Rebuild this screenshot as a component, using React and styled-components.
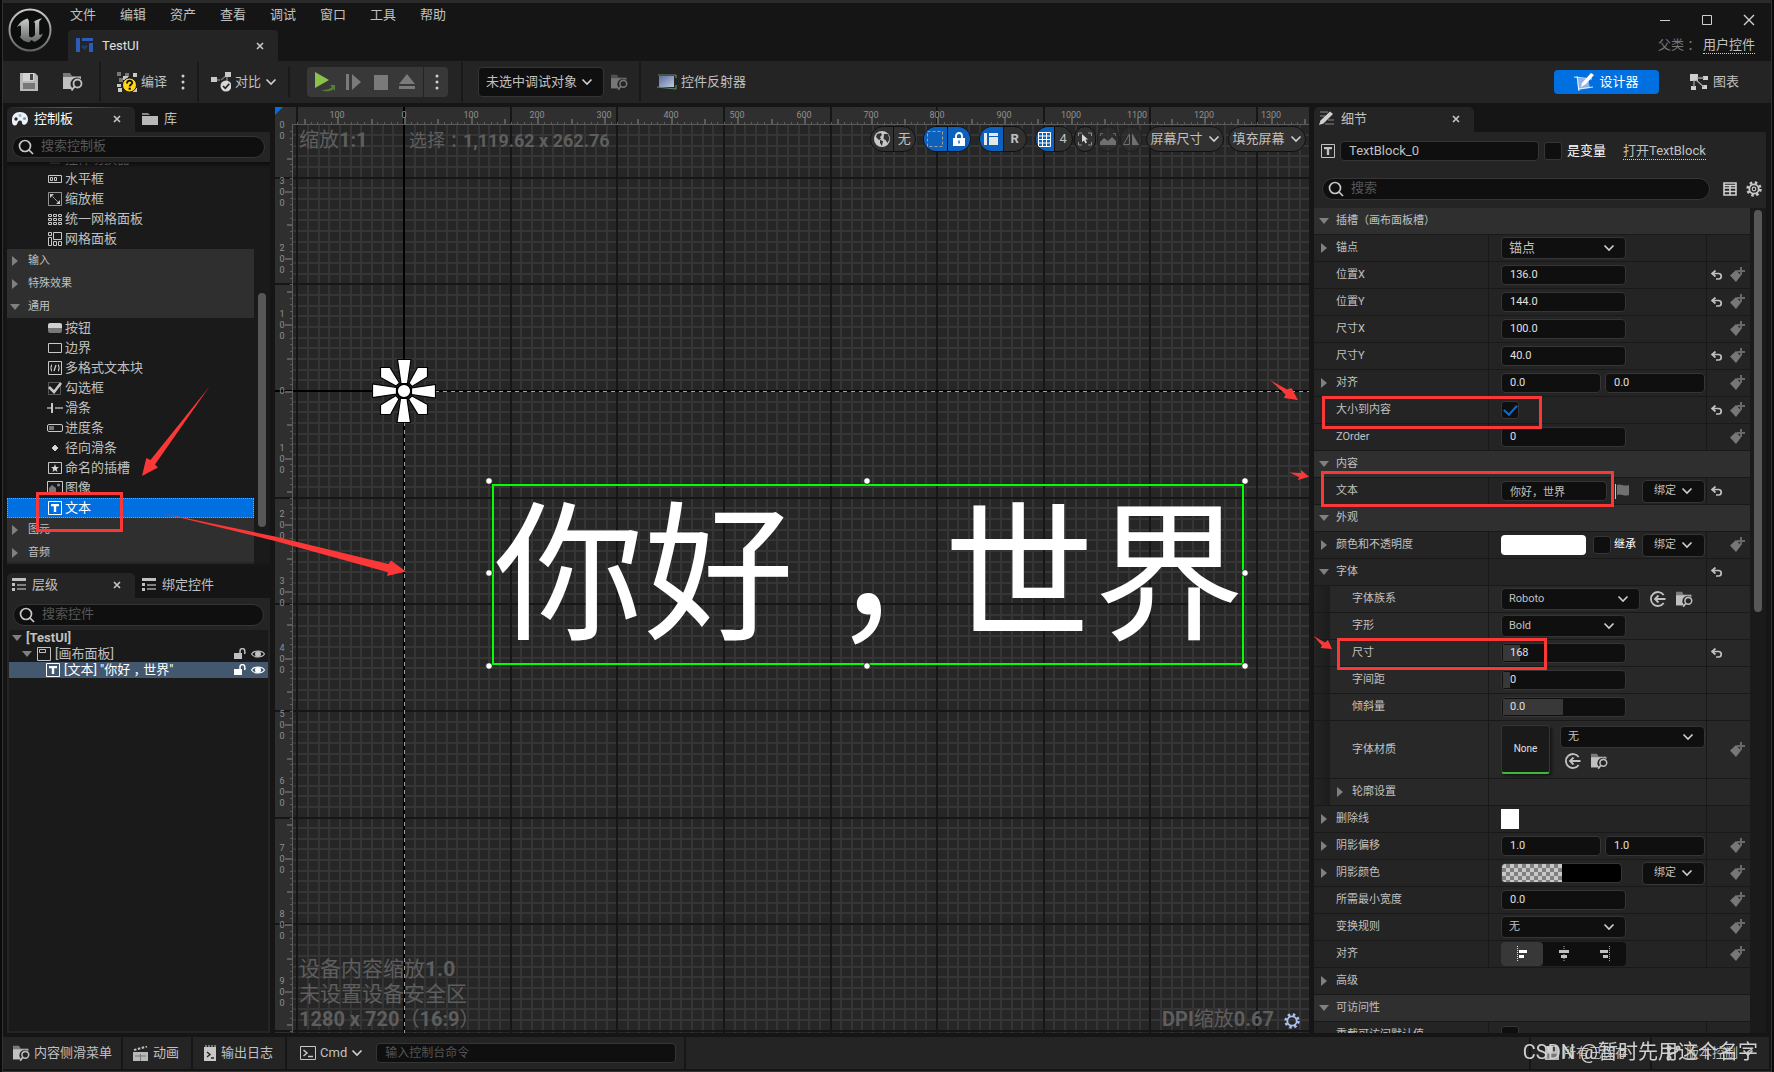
import React from "react";
import styled, { createGlobalStyle, css } from "styled-components";

const GlobalStyle = createGlobalStyle`
  * {
    box-sizing: border-box;
  }

  body {
    margin: 0;
    background: #0a0a0a;
    overflow: hidden;
  }

  body, button, input, select {
    font-family: Roboto, "Noto Sans CJK SC", sans-serif;
    font-size: 13px;
    line-height: 16px;
    color: #c0c0c0;
  }

  button {
    border: 0;
    padding: 0;
    margin: 0;
    background: none;
    white-space: nowrap;
  }

  svg {
    display: block;
    flex: none;
  }
`;

/* ---------- icons ---------- */

const Svg = ({ w = 16, h = 16, box, children, ...rest }) => (
  <svg width={w} height={h} viewBox={box || `0 0 ${w} ${h}`} aria-hidden="true" {...rest}>
    {children}
  </svg>
);

const Chevron = () => (
  <Svg w={12} h={8} fill="none" stroke="#d0d0d0" strokeWidth="1.600">
    <path d="M1.500 1.500 6 6l4.500-4.500" />
  </Svg>
);

const Cross = ({ size = 8 }) => (
  <Svg w={size} h={size} box="0 0 8 8" stroke="#c8c8c8" strokeWidth="1.600">
    <path d="M1 1l6 6M7 1L1 7" />
  </Svg>
);

const ArrowRight = () => (
  <Svg w={10} h={10} fill="#808080">
    <path d="M2 0l6 5-6 5z" />
  </Svg>
);

const ArrowDown = () => (
  <Svg w={10} h={10} fill="#808080">
    <path d="M0 2h10L5 8z" />
  </Svg>
);

const SearchIcon = () => (
  <Svg fill="none" stroke="#c8c8c8" strokeWidth="1.700">
    <circle cx="7" cy="7" r="5.500" />
    <path d="M11 11l4 4" />
  </Svg>
);

const Dots = () => (
  <Svg w={4} h={16} fill="#d0d0d0">
    <circle cx="2" cy="2" r="1.500" />
    <circle cx="2" cy="8" r="1.500" />
    <circle cx="2" cy="14" r="1.500" />
  </Svg>
);

const BrowseIcon = ({ size = 20, color = "#c0c0c0", bg = "#242424" }) => (
  <Svg w={size} h={size} box="0 0 20 20">
    <path d="M0 1h7l2 3h9v3H0z" fill={color} opacity=".55" />
    <path d="M0 5h18v12H0z" fill={color} />
    <circle cx="14" cy="12" r="6.500" fill={bg} />
    <circle cx="14.500" cy="11.500" r="4" fill={bg} stroke={color} strokeWidth="1.800" />
    <path d="M11.500 14.500L8.500 18.500" stroke={color} strokeWidth="2" />
  </Svg>
);

const UseIcon = () => (
  <Svg fill="none" stroke="#c0c0c0" strokeWidth="1.800">
    <path d="M13.700 4A7 7 0 1 0 13.700 12" />
    <path d="M15.500 8H5M8.500 4.500L5 8l3.500 3.500" />
  </Svg>
);

const UnrealLogo = () => (
  <Svg w={44} h={44}>
    <defs>
      <linearGradient id="ueMetal" x1="0" y1="0" x2="0" y2="1">
        <stop offset="0" stopColor="#c8cccc" />
        <stop offset="1" stopColor="#606464" />
      </linearGradient>
    </defs>
    <circle cx="22" cy="22" r="20.500" fill="#0d0d0d" stroke="url(#ueMetal)" strokeWidth="2" />
    <path
      fill="url(#ueMetal)"
      d="M19.500 10.500c-4 1-8.500 4-10.500 9 1.500-1.800 3-2.600 3.600-1.800.5.600.4 1.800.4 3v6.500c0 1-.6 1.600-1.500 1.400 2.500 3.600 5.500 5.400 9.500 6l2.500-2.600 3 2c4-1.500 7-4.500 8.500-8.500-1.500 1.300-3 1.800-3.500 1.200-.4-.4-.3-1.400-.3-2.500V13.800c.6-1.500 1.800-2.400 3-3.300-3 .2-6.500 1.500-9 4 .9-.4 1.800-.2 1.800 1.200v11c-.8 1.300-2 2.200-3.500 2.500-1.600.3-2.500-.6-2.500-2.200V14c0-1.500-.6-2.300-1.500-3.500z"
    />
  </Svg>
);

const WidgetIcon = () => (
  <Svg w={17} h={15}>
    <path d="M0 0h4v14H0zM6 0h11v3H6zM13 5h4v9h-4z" fill="#2b5cb8" />
    <path d="M8.500 12L5.500 9c-.5-1.500 2-2.500 3-.7 1-1.800 3.500-.8 3 .7z" fill="#1d3c78" />
  </Svg>
);

const SaveIcon = ({ size = 18 }) => (
  <Svg w={size} h={size} box="0 0 18 18" fill="#b8b8b8">
    <path d="M0 0h15l3 3v15H0z" />
    <path d="M3 0h11v8H3z" fill="#d4d4d4" />
    <path d="M10 1h3v6h-3z" fill="#444" />
    <path d="M3 10h12v6H3z" fill="#777" />
  </Svg>
);

const CompileIcon = () => (
  <Svg w={20} h={20}>
    <path d="M0 0h4v4H0zM8 1h4v4H8zM2 6h4v4H2z" fill="#777" />
    <path d="M16 1h4v4h-4zM0 12h4v3H0zM1 16h4v4H1zM6 4h5v4H6zM16 16h4v4h-4z" fill="#c8c8c8" />
    <circle cx="12.500" cy="13" r="7" fill="#ffd618" stroke="#1a1a1a" />
    <path d="M10 11.500c0-3.800 5.200-3.500 5.200-.7 0 1.700-2.500 1.800-2.500 3.700" fill="none" stroke="#111" strokeWidth="1.900" />
    <path d="M11.600 15.700h2.200v2h-2.200z" fill="#111" />
  </Svg>
);

const DiffIcon = () => (
  <Svg w={20} h={20}>
    <path d="M5 8h4M10 8l6-5v8" stroke="#777" strokeWidth="1.500" fill="none" />
    <path d="M0 5h6v5H0zM14 0h6v5h-6z" fill="#c8c8c8" />
    <circle cx="15" cy="14" r="5.500" fill="#d8d8d8" />
    <path d="M12 14l2.300 2.300 4-4.500" fill="none" stroke="#222" strokeWidth="1.700" />
  </Svg>
);

const PlayIcon = () => (
  <Svg w={20} h={20}>
    <path d="M0 0l14 8L0 16z" fill="#8bc34a" />
    <path d="M6 18c5 .5 9-1 11-3l-2-2h5v6l-1.500-2c-3 2.500-7 3-12.500 1z" fill="#55803a" />
  </Svg>
);

const StepIcon = () => (
  <Svg w={16} h={16} fill="#7a7a7a">
    <path d="M0 0h3v16H0zM6 0l9 8-9 8z" />
  </Svg>
);

const StopIcon = () => (
  <Svg w={14} h={16} fill="#7a7a7a">
    <path d="M0 1h14v15H0z" />
  </Svg>
);

const EjectIcon = () => (
  <Svg w={16} h={16} fill="#7a7a7a">
    <path d="M8 0l8 10H0zM0 12h16v3H0z" />
  </Svg>
);

const ReflectorIcon = () => (
  <Svg w={20} h={16}>
    <defs>
      <linearGradient id="screen" x1="0" y1="0" x2="1" y2="1">
        <stop offset="0" stopColor="#5c6ca0" />
        <stop offset="1" stopColor="#c0c8e0" />
      </linearGradient>
    </defs>
    <path d="M2 2h15v11H2z" fill="url(#screen)" />
    <path d="M1 1h18M0 13l19 2M19 1v3M19 11v4" stroke="#5f8a66" strokeWidth="1.200" fill="none" />
  </Svg>
);

const DesignerIcon = () => (
  <Svg w={20} h={18}>
    <path d="M3 5l11 1 2 9-12 2z" fill="#8fb4e6" />
    <path d="M0 4l18 2M3 3l2 15M4 16l15-2" stroke="#e6eefa" strokeWidth="1" />
    <path d="M7 14l1-4L17 0l3 2-8 9z" fill="#fff" />
  </Svg>
);

const GraphIcon = () => (
  <Svg w={18} h={16} fill="#d0d0d0">
    <path d="M0 0h8v7H0zM13 2h5v4h-5zM1 12h5v4H1zM12 11h5v4h-5z" />
    <path d="M7 4h7M4 6v7M6 6l8 7" stroke="#a0a0a0" strokeWidth="1.300" />
  </Svg>
);

const PaletteIcon = () => (
  <Svg w={16} h={14}>
    <path d="M8 0c5 0 8 3 8 7.500 0 4-3 6-5 5-2-1 0-4-3-4s-2 5-5 5C0 13.500 0 10 0 8 0 3 3 0 8 0z" fill="#eef2f8" />
    <circle cx="4" cy="7" r="1.700" fill="#2a2a2a" />
    <circle cx="8" cy="3.500" r="1.500" fill="#9ab4dc" />
    <circle cx="12.500" cy="6.500" r="1.600" fill="#7ba0d8" />
  </Svg>
);

const FolderIcon = () => (
  <Svg w={16} h={12} fill="#b8b8b8">
    <path d="M0 0h6l2 2H0z" fill="#888" />
    <path d="M0 3h16v9H0z" />
  </Svg>
);

const ListIcon = () => (
  <Svg w={14} h={13} fill="#c0c0c0">
    <path d="M0 0h14v3H0zM0 5h3v3H0zM0 10h3v3H0z" />
    <path d="M5 6h9v2H5zM5 10h9v2H5z" fill="#808080" />
  </Svg>
);

const PencilIcon = () => (
  <Svg w={16} h={15}>
    <path d="M1 1h8M1 5h5M9 9h6M6 13h9" stroke="#666" strokeWidth="1.500" />
    <path d="M0 14l1.500-4.500L11 .5 14 3 4.500 12.500z" fill="#d0d0d0" />
  </Svg>
);

const TIcon = () => (
  <Svg w={14} h={14}>
    <path d="M.5.5h13v13H.5z" fill="none" stroke="currentColor" />
    <path d="M3 3h8v2.200H8.200V11H5.800V5.200H3z" fill="currentColor" />
  </Svg>
);

const Diamond = () => (
  <Svg w={16} h={16}>
    <path d="M7 3l5 5.500L7 15 1 8.500z" fill="#777" />
    <path d="M12 0v8M8 4h8" stroke="#6a6a6a" strokeWidth="2" />
  </Svg>
);

const Undo = () => (
  <Svg w={12} h={10} fill="none" stroke="#c0c0c0" strokeWidth="1.700">
    <path d="M4.500.5L1 3.500l3.500 3M1 3.500h6.500a2.700 2.700 0 0 1 0 5.500H5" />
  </Svg>
);

const Flag = () => (
  <Svg w={14} h={15}>
    <path d="M.5 0v15" stroke="#c8c8c8" />
    <path d="M2 1c4-2 6 2 12 0v10c-5 2-8-2-12 0z" fill="#707070" />
  </Svg>
);

const OpenLock = () => (
  <Svg w={12} h={12}>
    <path d="M0 5h8v6H0z" fill="currentColor" />
    <path d="M6 5V3a2.400 2.400 0 0 1 4.800 0v3" fill="none" stroke="currentColor" strokeWidth="1.500" />
  </Svg>
);

const Eye = () => (
  <Svg w={14} h={10}>
    <path d="M.5 5C3 1 11 1 13.500 5 11 9 3 9 .5 5z" fill="none" stroke="currentColor" strokeWidth="1.200" />
    <circle cx="7" cy="5" r="3" fill="currentColor" />
  </Svg>
);

const TableIcon = () => (
  <Svg w={14} h={14} fill="none" stroke="#d0d0d0" strokeWidth="1.600">
    <path d="M1 1h12v12H1zM1 3.500h12M1 6h12M1 9.500h12M7 4v9" />
  </Svg>
);

const Gear = ({ color = "#c8c8c8", hub = true }) => (
  <Svg fill="none" stroke={color}>
    <circle cx="8" cy="8" r="6.400" strokeWidth="2.600" strokeDasharray="2.500 2.527" />
    <circle cx="8" cy="8" r="4.700" strokeWidth="1.800" />
    {hub && <circle cx="8" cy="8" r="1.800" strokeWidth="1.200" />}
  </Svg>
);

const treeIcons = {
  switcher: <path d="M3 4h10v8H3z" fill="#aaa" />,
  hbox: <path d="M1.500 4.500h13v7h-13zM3.500 6.500h2v3h-2zM7.500 6.500h2v3h-2z" />,
  scale: (
    <>
      <path d="M1.500 1.500h13v13h-13z" opacity=".7" />
      <path d="M4 4l8 8" strokeDasharray="2 1" />
      <path d="M3 3h4L3 7zM13 13H9l4-4z" fill="#c8c8c8" stroke="none" />
    </>
  ),
  uniform: <path d="M1.500 3.500h3v2h-3zM6.500 3.500h3v2h-3zM11.500 3.500h3v2h-3zM1.500 7.500h3v2h-3zM6.500 7.500h3v2h-3zM11.500 7.500h3v2h-3zM1.500 11.500h3v2h-3zM6.500 11.500h3v2h-3zM11.500 11.500h3v2h-3z" />,
  grid: <path d="M1.500 1.500h3v3h-3zM6.500 1.500h8v7h-8zM1.500 6.500h3v8h-3zM6.500 10.500h3v4h-3zM11.500 10.500h3v4h-3z" />,
  button: (
    <>
      <path d="M1 8V5a2 2 0 0 1 2-2h10a2 2 0 0 1 2 2v3z" fill="#d0d0d0" stroke="none" />
      <path d="M1 8v3a2 2 0 0 0 2 2h10a2 2 0 0 0 2-2V8z" fill="#777" stroke="none" />
    </>
  ),
  border: <path d="M1.500 3.500h13v9h-13z" />,
  rich: (
    <>
      <path d="M1.500 1.500h13v13h-13z" />
      <path d="M5 5c-1 0-.5 3-1.500 3 1 0 .5 3 1.500 3M11 5c1 0 .5 3 1.500 3-1 0-.5 3-1.500 3M9 5l-2 6" strokeWidth="1.300" />
    </>
  ),
  check: (
    <>
      <path d="M1.500 2.500h12v12h-12z" opacity=".35" />
      <path d="M2 7l5 5 7-9" strokeWidth="2.600" />
    </>
  ),
  slider: (
    <>
      <path d="M0 8h5M8 8h8" strokeWidth="2" stroke="#888" />
      <path d="M5 3v10" strokeWidth="2" />
    </>
  ),
  progress: (
    <>
      <rect x=".5" y="4.500" width="15" height="7" rx="1.500" />
      <path d="M2 6h5v4H2z" fill="#777" stroke="none" />
    </>
  ),
  radial: <path d="M8 5l3 3-3 3-3-3z" fill="#d8d8d8" />,
  named: (
    <>
      <path d="M1.500 2.500h13v11h-13z" />
      <path d="M8 4l1 3h3L9.700 9l.8 3L8 10.200 5.500 12l.8-3L4 7h3z" fill="#d8d8d8" stroke="none" />
    </>
  ),
  image: (
    <>
      <path d="M.5 1.500h15v12H.5z" />
      <path d="M2 13V8l3-3 4 3v5z" fill="#777" stroke="none" />
      <circle cx="11.500" cy="5" r="1.500" fill="#888" stroke="none" />
    </>
  ),
  text: (
    <>
      <path d="M1.500 1.500h13v13h-13z" />
      <path d="M4 4h8v2.200H9.200V12H6.800V6.200H4z" fill="#fff" stroke="none" />
    </>
  ),
};

const TreeIcon = ({ name }) => (
  <Svg fill="none" stroke={name === "text" ? "#fff" : "#c8c8c8"}>
    {treeIcons[name]}
  </Svg>
);

/* ---------- shell ---------- */

const Window = styled.div`
  position: relative;
  height: 100vh;
  margin: 0 2px;
  padding-bottom: 2px;
  display: flex;
  flex-direction: column;
  background: #151515;
  border: 1px solid #333;
  border-top-width: 3px;
  border-top-color: #2a2a2a;
`;

const TitleBar = styled.header`
  flex: 0 0 58px;
  display: flex;
  padding-left: 5px;
`;

const LogoCell = styled.div`
  width: 50px;
  padding-top: 5px;
`;

const TitleMain = styled.div`
  flex: 1;
  display: flex;
  flex-direction: column;
  justify-content: space-between;
`;

const Menu = styled.nav`
  display: flex;
  padding-top: 4px;

  button {
    width: 50px;
    text-align: center;
  }
`;

const AssetTab = styled.div`
  width: 210px;
  height: 31px;
  margin-left: 10px;
  padding: 0 14px 0 8px;
  display: flex;
  align-items: center;
  background: #242424;
  border-radius: 4px 4px 0 0;
  color: #e0e0e0;

  span {
    flex: 1;
    padding-left: 9px;
  }
`;

const TitleSide = styled.div`
  padding: 6px 16px 0 0;
  display: flex;
  flex-direction: column;
  align-items: flex-end;
  gap: 6px;
`;

const WindowButtons = styled.div`
  display: flex;
  gap: 30px;

  button {
    width: 12px;
    height: 22px;
    display: flex;
    align-items: center;
    justify-content: center;
  }
`;

const ParentClass = styled.div`
  display: flex;
  gap: 6px;
  color: #777;
`;

const DottedLink = styled.a`
  color: #c0c0c0;
  text-decoration: none;
  border-bottom: 1px dotted #d0d0d0;
`;

// full-width marks sit in the middle of their cell
const Mark = styled.span`
  display: inline-block;
  width: 1em;
  text-indent: 0.25em;
  white-space: nowrap;
`;

const Toolbar = styled.div`
  flex: 0 0 42px;
  display: flex;
  align-items: center;
  background: #242424;
`;

const ToolGroup = styled.div`
  height: ${(p) => (p.$short ? 30 : 40)}px;
  padding: 0 ${(p) => p.$right || 0}px 0 ${(p) => p.$left || 0}px;
  display: flex;
  align-items: center;
  gap: ${(p) => p.$gap || 0}px;
  border-right: ${(p) => (p.$last ? 0 : 2)}px solid #191919;
`;

const ToolButton = styled.button`
  display: flex;
  align-items: center;
  gap: 4px;
`;

const PlayGroup = styled.div`
  width: 141px;
  height: 30px;
  padding: 0 9px 0 8px;
  display: flex;
  align-items: center;
  justify-content: space-between;
  background: #383838;
  border-radius: 4px;

  i {
    width: 1px;
    height: 30px;
    background: #242424;
    margin: 0 0 0 -4px;
  }
`;

const ModeSwitch = styled.div`
  margin-left: auto;
  padding-right: 32px;
  display: flex;
  align-items: center;
  gap: 31px;
`;

const ModeButton = styled(ToolButton)`
  height: 24px;
  gap: 5px;
  ${(p) =>
    p.$active &&
    css`
      width: 105px;
      justify-content: center;
      background: #0070e0;
      border-radius: 4px;
      color: #fff;
    `}
`;

const Workspace = styled.main`
  flex: 1;
  min-height: 0;
  display: grid;
  grid-template-columns: 263px minmax(0, 1fr) 452px;
  column-gap: 5px;
  padding: 4px 5px 4px 4px;
`;

const StatusBar = styled.footer`
  flex: 0 0 32px;
  display: flex;
  background: #242424;
`;

const StatusItem = styled.div`
  display: flex;
  align-items: center;
  gap: ${(p) => p.$gap || 5}px;
  padding: 0 ${(p) => p.$right || 12}px 0 ${(p) => p.$left || 10}px;
  border-right: 2px solid #161616;
  margin-left: ${(p) => (p.$push ? "auto" : 0)};
`;

/* ---------- form controls ---------- */

const Field = styled.input`
  width: ${(p) => (p.$w ? `${p.$w}px` : "100%")};
  min-width: 0;
  height: 20px;
  padding: 0 8px 1px;
  font-size: ${(p) => p.$size || 11}px;
  color: ${(p) => p.$color || "#e0e0e0"};
  border: 1px solid #353535;
  border-radius: 4px;
  outline: 0;
  background: ${(p) =>
    p.$fill ? `linear-gradient(#383838, #383838) 1px 1px / ${p.$fill}% calc(100% - 2px) no-repeat #0f0f0f` : "#0f0f0f"};

  &::placeholder {
    color: #555;
  }
`;

const SearchBox = styled.label`
  flex: 1;
  height: 22px;
  padding: 0 5px;
  display: flex;
  align-items: center;
  gap: 7px;
  background: #0f0f0f;
  border: 1px solid #353535;
  border-radius: 11px;

  input {
    flex: 1;
    min-width: 0;
    padding: 0 0 2px;
    border: 0;
    outline: 0;
    background: none;
  }

  input::placeholder {
    color: #575757;
  }
`;

const Search = ({ placeholder }) => (
  <SearchBox>
    <SearchIcon />
    <input type="text" aria-label={placeholder} placeholder={placeholder} />
  </SearchBox>
);

const ComboWrap = styled.div`
  width: ${(p) => (p.$w ? `${p.$w}px` : "100%")};
  display: grid;
  align-items: center;

  select {
    grid-area: 1 / 1;
    width: 100%;
    height: ${(p) => p.$h || 22}px;
    padding: 0 24px 0 7px;
    font-size: ${(p) => p.$size || 11}px;
    appearance: none;
    background: #0f0f0f;
    border: 1px solid #353535;
    border-radius: 4px;
    outline: 0;
  }

  svg {
    grid-area: 1 / 1;
    justify-self: end;
    margin-right: 11px;
    pointer-events: none;
  }
`;

const Combo = ({ value, id, label, ...size }) => (
  <ComboWrap {...size}>
    <select id={id} aria-label={label}>
      <option>{value}</option>
    </select>
    <Chevron />
  </ComboWrap>
);

const Check = styled.input.attrs({ type: "checkbox" })`
  appearance: none;
  flex: none;
  width: 18px;
  height: 18px;
  margin: 0;
  background: #0f0f0f;
  border: 1px solid #353535;
  border-radius: 3px;
  display: grid;
  place-items: center;

  &:checked::after {
    content: "";
    width: 11px;
    height: 6px;
    border: solid #0070e0;
    border-width: 0 0 2px 2px;
    transform: rotate(-48deg) translate(1px, -1px);
  }
`;

const BindButton = styled.button`
  width: 63px;
  height: 23px;
  margin-left: auto;
  display: flex;
  align-items: center;
  justify-content: center;
  gap: 5px;
  font-size: 11px;
  background: #0f0f0f;
  border: 1px solid #353535;
  border-radius: 4px;
`;

const Bind = () => (
  <BindButton>
    绑定
    <Chevron />
  </BindButton>
);

/* ---------- dock tabs ---------- */

const TabRow = styled.div`
  height: 25px;
  display: flex;
`;

const Tab = styled.div`
  width: ${(p) => p.$w || 128}px;
  padding: 0 14px 2px ${(p) => (p.$idle ? 7 : 5)}px;
  display: flex;
  align-items: center;
  gap: 6px;
  color: ${(p) => (p.$focus ? "#fff" : "#c0c0c0")};
  background: ${(p) => (p.$idle ? "none" : "#242424")};
  border-radius: 5px 5px 0 0;
  ${(p) =>
    p.$focus &&
    css`
      background: linear-gradient(90deg, #242424, #0070e0 50%, #242424) 0 0 / 100% 1px no-repeat #242424;
    `}

  span {
    flex: 1;
  }
`;

const SearchRow = styled.div`
  padding: ${(p) => p.$pad || "4px 5px"};
  background: #242424;
  display: flex;
`;

const LeftColumn = styled.div`
  min-height: 0;
  display: flex;
  flex-direction: column;
  gap: 6px;
`;

const PalettePanel = styled.section`
  flex: 0 0 460px;
  min-height: 0;
  display: flex;
  flex-direction: column;
  overflow: hidden;
`;

const PaletteBody = styled.div`
  position: relative;
  flex: 1;
  min-height: 0;
  display: flex;
  background: #1a1a1a;
  overflow: hidden;

  &::before,
  &::after {
    content: "";
    position: absolute;
    left: 0;
    right: 0;
    height: 6px;
  }

  &::before {
    top: 0;
    background: linear-gradient(#0d0d0d, transparent);
  }

  &::after {
    bottom: 0;
    background: linear-gradient(transparent, #151515);
  }
`;

const PaletteList = styled.ul`
  flex: 1;
  margin: 0;
  padding: 0 0 3px;
  list-style: none;
  display: flex;
  flex-direction: column;
  justify-content: flex-end;
`;

const PaletteItem = styled.li`
  flex: 0 0 20px;
  padding-left: 40px;
  display: flex;
  align-items: center;
  gap: 2px;
  ${(p) =>
    p.$selected &&
    css`
      background: #0070e0;
      color: #fff;
      outline: 1px dotted #c89632;
      outline-offset: -1px;
    `}
`;

const Category = styled.li`
  flex: 0 0 23px;
  padding-left: 3px;
  display: flex;
  align-items: center;
  gap: 8px;
  font-size: 11px;
  background: #2f2f2f;
`;

const Track = styled.div`
  flex: 0 0 16px;
  display: flex;
  justify-content: center;
  background: #1a1a1a;
`;

const Thumb = styled.div`
  width: 8px;
  height: ${(p) => p.$h}px;
  margin-top: ${(p) => p.$top}px;
  border-radius: 4px;
  background: #575757;
`;

const HierarchyPanel = styled.section`
  flex: 1;
  min-height: 0;
  display: flex;
  flex-direction: column;
`;

const HierarchyBody = styled.div`
  flex: 1;
  background: #1a1a1a;
  border: solid #242424;
  border-width: 0 2px 2px;
`;

const HierarchyRow = styled.div`
  height: 16px;
  padding: 0 3px 0 ${(p) => 3 + p.$depth * 10}px;
  display: flex;
  align-items: center;
  gap: 4px;
  color: ${(p) => (p.$selected ? "#fff" : "#c0c0c0")};
  background: ${(p) => (p.$selected ? "#43586f" : "none")};

  svg + svg {
    margin-left: 1px;
  }
`;

const HierarchyName = styled.span`
  flex: 1;
  font-weight: ${(p) => (p.$root ? 700 : 400)};
`;

/* ---------- canvas ---------- */

const CanvasPanel = styled.section`
  position: relative;
  overflow: hidden;
  background: #262626;
`;

const Drawing = styled.svg`
  position: absolute;
  inset: 0;
  width: 100%;
  height: 100%;
`;

const CanvasTools = styled.div`
  position: absolute;
  top: 19px;
  right: 3px;
  display: flex;
  gap: 1px;
`;

const Pill = styled.div`
  width: ${(p) => p.$w || 22}px;
  height: 26px;
  margin-left: ${(p) => p.$gap || 0}px;
  display: flex;
  overflow: hidden;
  background: ${(p) => (p.$dim ? "rgba(47, 47, 47, 0.6)" : "#313131")};
  border: 1px solid ${(p) => (p.$dim ? "#202020" : "#111")};
  border-radius: 13px;
`;

const PillButton = styled.button`
  flex: 1;
  display: flex;
  align-items: center;
  justify-content: center;
  gap: 5px;
  background: ${(p) => (p.$on ? "#0c61bd" : "none")};

  & + & {
    border-left: 1px solid #111;
  }
`;

const CanvasNote = styled.div`
  position: absolute;
  display: flex;
  align-items: center;
  font-size: ${(p) => p.$size || 20}px;
  line-height: 25px;
  color: #5e5e5e;
`;

const TextWidget = styled.div`
  position: absolute;
  left: 217px;
  top: 377px;
  width: 752px;
  height: 181px;
  border: 2px solid #00ff00;
  text-align: center;
  font-size: 150px;
  line-height: 182px;
  color: #fff;
  white-space: nowrap;
`;

const ORIGIN = { x: 129, y: 284 };
const CELL = 106.625;
const HUNDRED = 66.667;

const range = (from, to) => Array.from({ length: to - from + 1 }, (_, i) => from + i);

const gridLines = (origin, size) => {
  const step = CELL / 10;
  return range(-Math.floor(origin / step), Math.ceil(size / step)).map((i) => ({
    pos: Math.round(origin + i * step),
    major: i % 10 === 0,
  }));
};

const tickLength = (i) => (i % 10 === 0 ? 7 : i % 5 === 0 ? 5 : 2);

const CanvasDrawing = () => {
  const xs = gridLines(ORIGIN.x, 3000);
  const ys = gridLines(ORIGIN.y, 2000);
  const ticksX = range(-16, 400);
  const ticksY = range(-40, 300);
  return (
    <Drawing aria-hidden="true">
      <g fill="#353535">
        {xs.filter((l) => !l.major).map((l) => <rect key={`x${l.pos}`} x={l.pos - 1} y="0" width="2" height="3000" />)}
        {ys.filter((l) => !l.major).map((l) => <rect key={`y${l.pos}`} x="0" y={l.pos - 1} width="3000" height="2" />)}
      </g>
      <path d="M0 0H3000V17H18V3000H0z" fill="#2f2f2f" />
      <g fill="#161616">
        {xs.filter((l) => l.major).map((l) => <rect key={`x${l.pos}`} x={l.pos - 1} y="0" width="2" height="3000" />)}
        {ys.filter((l) => l.major).map((l) => <rect key={`y${l.pos}`} x="0" y={l.pos - 1} width="3000" height="2" />)}
      </g>
      <path d={`M${ORIGIN.x} 0V3000M0 ${ORIGIN.y}H3000`} stroke="#000" strokeWidth="2" />
      <path
        d={`M${ORIGIN.x + 0.5} ${ORIGIN.y + 31}V3000M${ORIGIN.x + 31} ${ORIGIN.y + 0.5}H3000`}
        stroke="#a0a0a0"
        strokeDasharray="4 4"
      />
      <path d="M17.500 17V3000M18 17.500H3000" stroke="#5c5c5c" />
      <g fill="#5c5c5c">
        {ticksX.map((i) => {
          const x = Math.round(ORIGIN.x + (i * HUNDRED) / 10);
          return <rect key={i} x={x} y={17 - tickLength(i)} width={i % 5 ? 1 : 2} height={tickLength(i)} />;
        })}
        {ticksY.map((i) => {
          const y = Math.round(ORIGIN.y + (i * HUNDRED) / 10);
          return y > 17 && <rect key={i} x={17 - tickLength(i)} y={y} width={tickLength(i)} height={i % 5 ? 1 : 2} />;
        })}
      </g>
      <path d="M0 0h8L0 8z" fill="#0070e0" />
      <g fill="#909090" fontSize="9" textAnchor="middle">
        {range(-1, 13).map((n) => (
          <text key={n} x={Math.round(ORIGIN.x + n * HUNDRED)} y="11">
            {Math.abs(n * 100)}
          </text>
        ))}
        {range(-4, 9).map((n) => {
          const digits = String(Math.abs(n * 100)).split("");
          const top = Math.round(ORIGIN.y + n * HUNDRED) + 3 - (digits.length - 1) * 5;
          return digits.map((d, i) =>
            top + i * 11 > 20 ? (
              <text key={`${n}-${i}`} x="7" y={top + i * 11}>
                {d}
              </text>
            ) : null
          );
        })}
      </g>
      <g transform={`translate(${ORIGIN.x} ${ORIGIN.y})`} fill="#fff" stroke="#000" strokeWidth="1.200">
        {[0, 90, 180, 270].map((a) => (
          <g key={a} transform={`rotate(${a})`}>
            <path d="M-6.500 -31.500H7L3.500 -7.500H-3z" />
            <path d="M23.500 -23.500V-14L8 -4.500 5 -8 13.500 -23.500z" />
          </g>
        ))}
        <circle r="7" strokeWidth="1.800" />
      </g>
    </Drawing>
  );
};

const Handles = () => (
  <Drawing aria-hidden="true">
    {[
      [214, 374],
      [592, 374],
      [970, 374],
      [214, 466],
      [970, 466],
      [214, 559],
      [592, 559],
      [970, 559],
    ].map(([x, y]) => (
      <circle key={`${x}-${y}`} cx={x} cy={y} r="3.300" fill="#fff" stroke="#111" strokeWidth=".8" />
    ))}
  </Drawing>
);

/* ---------- details ---------- */

const DetailsPanel = styled.section`
  min-height: 0;
  display: flex;
  flex-direction: column;
`;

const NameRow = styled.div`
  padding: 9px 5px 8px 7px;
  display: flex;
  align-items: center;
  gap: 5px;
  background: #242424;

  label {
    margin-right: 12px;
    color: #fff;
  }
`;

const FilterRow = styled.div`
  padding: 9px 4px 8px 8px;
  display: flex;
  align-items: center;
  gap: 9px;
  background: #242424;

  label {
    margin-right: 4px;
  }
`;

const DetailsBody = styled.div`
  flex: 1;
  min-height: 0;
  display: flex;
`;

const Rows = styled.div`
  flex: 1;
  overflow: hidden;
`;

const Section = styled.div`
  height: 27px;
  padding-left: 5px;
  display: flex;
  align-items: center;
  gap: 7px;
  font-size: 11px;
  background: ${(p) => (p.$plain ? "#242424" : "#2f2f2f")};
  border-bottom: 1px solid #191919;
`;

const PropRow = styled.div`
  min-height: ${(p) => (p.$tall ? 58 : 27)}px;
  display: grid;
  grid-template-columns: 175px minmax(0, 1fr) 43px;
  font-size: 11px;
  background: ${(p) => (p.$inner ? "linear-gradient(90deg, #242424, #1c1c1c) 0 0 / 16px 100% no-repeat #282828" : "#242424")};
  border-bottom: 1px solid #191919;
`;

const NameCell = styled.div`
  padding-left: ${(p) => (p.$inner ? 21 : 5)}px;
  display: flex;
  align-items: center;
  gap: 7px;
  border-right: 1px solid #191919;
`;

const ArrowSlot = styled.span`
  width: 10px;
`;

const ValueCell = styled.div`
  padding: 0 1px 0 12px;
  display: flex;
  align-items: center;
  gap: ${(p) => p.$gap || 4}px;
  border-right: 1px solid #191919;
`;

const ActionCell = styled.div`
  padding: 0 5px 0 4px;
  display: flex;
  align-items: center;
  justify-content: space-between;
`;

const Swatch = styled.button`
  width: ${(p) => p.$w}px;
  height: 20px;
  background: #fff;
  border-radius: ${(p) => (p.$square ? 0 : 4)}px;
`;

const AlphaSwatch = styled(Swatch)`
  border: 1px solid #353535;
  background: linear-gradient(#000, #000) right / 50% 100% no-repeat,
    repeating-conic-gradient(#808080 0 25%, #c8c8c8 0 50%) 0 0 / 8px 8px;
`;

const InheritLabel = styled.label`
  display: flex;
  align-items: center;
  gap: 3px;
  margin-left: 3px;
  color: #fff;
`;

const Thumbnail = styled.div`
  width: 49px;
  height: 49px;
  display: grid;
  place-items: center;
  font-size: 10px;
  color: #e0e0e0;
  background: #1a1a1a;
  border: 1px solid #353535;
  border-bottom: 2px solid #3cb93c;
  border-radius: 3px;
  box-shadow: 2px 2px 3px #151515;
`;

const AssetPicker = styled.div`
  flex: 1;
  margin-left: 6px;
  padding-bottom: 4px;
  display: flex;
  flex-direction: column;
  gap: 5px;
`;

const AssetActions = styled.div`
  padding-left: ${(p) => p.$left || 0}px;
  display: flex;
  gap: 10px;
`;

const Segments = styled.div`
  width: 125px;
  height: 24px;
  display: flex;
  background: #0f0f0f;
  border-radius: 4px;

  button {
    flex: 1;
    display: grid;
    place-items: center;
    border-radius: 4px;
  }

  button:first-child {
    background: #383838;
  }
`;

const Prop = ({ name, id, inner, tall, arrow, undo, bare, gap, children }) => (
  <PropRow $inner={inner} $tall={tall}>
    <NameCell $inner={inner}>
      <ArrowSlot>{arrow === "down" ? <ArrowDown /> : arrow ? <ArrowRight /> : null}</ArrowSlot>
      {id ? <label htmlFor={id}>{name}</label> : <span>{name}</span>}
    </NameCell>
    <ValueCell $gap={gap}>{children}</ValueCell>
    <ActionCell>
      <span>{undo && <Undo />}</span>
      {!bare && <Diamond />}
    </ActionCell>
  </PropRow>
);

const alignIcons = [
  <Svg key="l" w={12} h={16} fill="#fff"><path d="M1.500 0v16" stroke="#ddd" strokeDasharray="1 1" /><path d="M3 4h8v3H3zM3 9h5v3H3z" /></Svg>,
  <Svg key="c" w={12} h={16} fill="#c0c0c0"><path d="M6 0v16" stroke="#aaa" strokeDasharray="1 1" /><path d="M1 4h10v3H1zM3 9h6v3H3z" /></Svg>,
  <Svg key="r" w={12} h={16} fill="#c0c0c0"><path d="M10.500 0v16" stroke="#aaa" strokeDasharray="1 1" /><path d="M1 4h8v3H1zM4 9h5v3H4z" /></Svg>,
];

const Details = () => (
  <DetailsPanel>
    <TabRow>
      <Tab $w={160}>
        <PencilIcon />
        <span>细节</span>
        <button aria-label="关闭"><Cross /></button>
      </Tab>
    </TabRow>
    <NameRow>
      <TIcon />
      <Field aria-label="名称" defaultValue="TextBlock_0" $w={199} $size={13} $color="#c0c0c0" />
      <Check id="isVar" />
      <label htmlFor="isVar">是变量</label>
      <DottedLink href="#">打开TextBlock</DottedLink>
    </NameRow>
    <FilterRow>
      <Search placeholder="搜索" />
      <TableIcon />
      <Gear />
    </FilterRow>
    <DetailsBody>
      <Rows>
        <Section><ArrowDown />插槽（画布面板槽）</Section>
        <Prop name="锚点" id="anchor" arrow bare><Combo id="anchor" value="锚点" $w={125} $size={13} /></Prop>
        <Prop name="位置X" id="posX" undo><Field id="posX" defaultValue="136.0" $w={125} /></Prop>
        <Prop name="位置Y" id="posY" undo><Field id="posY" defaultValue="144.0" $w={125} /></Prop>
        <Prop name="尺寸X" id="sizeX"><Field id="sizeX" defaultValue="100.0" $w={125} /></Prop>
        <Prop name="尺寸Y" id="sizeY" undo><Field id="sizeY" defaultValue="40.0" $w={125} /></Prop>
        <Prop name="对齐" id="alignX" arrow>
          <Field id="alignX" defaultValue="0.0" />
          <Field aria-label="对齐Y" defaultValue="0.0" />
        </Prop>
        <Prop name="大小到内容" id="autosize" undo><Check id="autosize" defaultChecked /></Prop>
        <Prop name="ZOrder" id="zorder"><Field id="zorder" defaultValue="0" $w={125} /></Prop>
        <Section><ArrowDown />内容</Section>
        <Prop name="文本" id="content" undo bare gap={8}>
          <Field id="content" defaultValue="你好，世界" $w={106} $color="#c0c0c0" />
          <Flag />
          <Bind />
        </Prop>
        <Section><ArrowDown />外观</Section>
        <Prop name="颜色和不透明度" arrow>
          <Swatch aria-label="颜色和不透明度" $w={85} />
          <InheritLabel><Check />继承</InheritLabel>
          <Bind />
        </Prop>
        <Prop name="字体" arrow="down" undo bare />
        <Prop name="字体族系" id="family" inner bare gap={10}>
          <Combo id="family" value="Roboto" $w={139} />
          <AssetActions><UseIcon /><BrowseIcon size={17} /></AssetActions>
        </Prop>
        <Prop name="字形" id="face" inner bare><Combo id="face" value="Bold" $w={125} /></Prop>
        <Prop name="尺寸" id="fontSize" inner undo bare><Field id="fontSize" defaultValue="168" $w={125} $fill={14} /></Prop>
        <Prop name="字间距" id="spacing" inner bare><Field id="spacing" defaultValue="0" $w={125} $fill={6} /></Prop>
        <Prop name="倾斜量" id="skew" inner bare><Field id="skew" defaultValue="0.0" $w={125} $fill={49} /></Prop>
        <Prop name="字体材质" id="material" inner tall>
          <Thumbnail>None</Thumbnail>
          <AssetPicker>
            <Combo id="material" value="无" />
            <AssetActions $left={5}><UseIcon /><BrowseIcon size={17} /></AssetActions>
          </AssetPicker>
        </Prop>
        <Prop name="轮廓设置" inner arrow bare />
        <Prop name="删除线" arrow bare><Swatch aria-label="删除线" $w={18} $square /></Prop>
        <Prop name="阴影偏移" id="shadowX" arrow>
          <Field id="shadowX" defaultValue="1.0" />
          <Field aria-label="阴影偏移Y" defaultValue="1.0" />
        </Prop>
        <Prop name="阴影颜色" arrow>
          <AlphaSwatch aria-label="阴影颜色" $w={121} />
          <Bind />
        </Prop>
        <Prop name="所需最小宽度" id="minWidth"><Field id="minWidth" defaultValue="0.0" $w={125} /></Prop>
        <Prop name="变换规则" id="transform"><Combo id="transform" value="无" $w={125} /></Prop>
        <Prop name="对齐">
          <Segments>
            {["左对齐", "居中", "右对齐"].map((label, i) => (
              <button key={label} aria-label={label}>{alignIcons[i]}</button>
            ))}
          </Segments>
        </Prop>
        <Section $plain><ArrowRight />高级</Section>
        <Section><ArrowDown />可访问性</Section>
        <Prop name="重载可访问默认值" id="override" bare><Check id="override" /></Prop>
      </Rows>
      <Track><Thumb $top={2} $h={402} /></Track>
    </DetailsBody>
  </DetailsPanel>
);

/* ---------- left column ---------- */

const palette = [
  { name: "控件切换器", icon: "switcher" },
  { name: "水平框", icon: "hbox" },
  { name: "缩放框", icon: "scale" },
  { name: "统一网格面板", icon: "uniform" },
  { name: "网格面板", icon: "grid" },
  { category: "输入" },
  { category: "特殊效果" },
  { category: "通用", open: true },
  { name: "按钮", icon: "button" },
  { name: "边界", icon: "border" },
  { name: "多格式文本块", icon: "rich" },
  { name: "勾选框", icon: "check" },
  { name: "滑条", icon: "slider" },
  { name: "进度条", icon: "progress" },
  { name: "径向滑条", icon: "radial" },
  { name: "命名的插槽", icon: "named" },
  { name: "图像", icon: "image" },
  { name: "文本", icon: "text", selected: true },
  { category: "图元" },
  { category: "音频" },
];

const Palette = () => (
  <PalettePanel>
    <TabRow>
      <Tab $focus>
        <PaletteIcon />
        <span>控制板</span>
        <button aria-label="关闭"><Cross /></button>
      </Tab>
      <Tab $idle>
        <FolderIcon />
        <span>库</span>
      </Tab>
    </TabRow>
    <SearchRow>
      <Search placeholder="搜索控制板" />
    </SearchRow>
    <PaletteBody>
      <PaletteList>
        {palette.map((row) =>
          row.category ? (
            <Category key={row.category}>
              {row.open ? <ArrowDown /> : <ArrowRight />}
              {row.category}
            </Category>
          ) : (
            <PaletteItem key={row.name} $selected={row.selected}>
              <TreeIcon name={row.icon} />
              {row.name}
            </PaletteItem>
          )
        )}
      </PaletteList>
      <Track><Thumb $top={131} $h={234} /></Track>
    </PaletteBody>
  </PalettePanel>
);

const Hierarchy = () => (
  <HierarchyPanel>
    <TabRow>
      <Tab>
        <ListIcon />
        <span>层级</span>
        <button aria-label="关闭"><Cross /></button>
      </Tab>
      <Tab $idle>
        <ListIcon />
        <span>绑定控件</span>
      </Tab>
    </TabRow>
    <SearchRow $pad="6px 6px 4px">
      <Search placeholder="搜索控件" />
    </SearchRow>
    <HierarchyBody>
      <HierarchyRow $depth={0}>
        <ArrowDown />
        <HierarchyName $root>[TestUI]</HierarchyName>
      </HierarchyRow>
      <HierarchyRow $depth={1}>
        <ArrowDown />
        <Svg w={14} h={14} fill="none" stroke="#c0c0c0">
          <path d="M.5.5h13v13H.5zM2.500 2.500h6v3h-6z" />
        </Svg>
        <HierarchyName>[画布面板]</HierarchyName>
        <OpenLock />
        <Eye />
      </HierarchyRow>
      <HierarchyRow $depth={2} $selected>
        <ArrowSlot />
        <TIcon />
        <HierarchyName>[文本] "你好<Mark>，</Mark>世界"</HierarchyName>
        <OpenLock />
        <Eye />
      </HierarchyRow>
    </HierarchyBody>
  </HierarchyPanel>
);

/* ---------- designer canvas ---------- */

const Designer = () => (
  <CanvasPanel>
    <CanvasDrawing />
    <CanvasNote style={{ left: 24, top: 21 }}>缩放<b>1:1</b></CanvasNote>
    <CanvasNote $size={18} style={{ left: 134, top: 21 }}>
      选择<Mark>：</Mark><b>1,119.62 x 262.76</b>
    </CanvasNote>
    <TextWidget>你好<Mark>，</Mark>世界</TextWidget>
    <Handles />
    <CanvasNote $size={21} style={{ left: 24, bottom: 51 }}>设备内容缩放<b>1.0</b></CanvasNote>
    <CanvasNote $size={21} style={{ left: 24, bottom: 26 }}>未设置设备安全区</CanvasNote>
    <CanvasNote style={{ left: 24, bottom: 1 }}><b>1280 x 720</b>（<b>16:9</b>）</CanvasNote>
    <CanvasNote style={{ right: 35, bottom: 1 }}><b>DPI</b>缩放<b>0.67</b></CanvasNote>
    <CanvasNote style={{ right: 9, bottom: 4 }}><Gear color="#a9c0f0" hub={false} /></CanvasNote>
    <CanvasTools>
      <Pill $w={46}>
        <PillButton aria-label="本地化">
          <Svg>
            <circle cx="8" cy="8" r="8" fill="#c8c8c8" />
            <path d="M3 3l4-1 1 2-2 2 1 2-2 1-3-3zM6 9l3 1-1 5-2-3zM10 3l4 0 1.500 5-2 4-2-3-2-1z" fill="#333" />
          </Svg>
        </PillButton>
        <PillButton>无</PillButton>
      </Pill>
      <Pill $w={48} $gap={6}>
        <PillButton $on aria-label="虚线轮廓">
          <Svg fill="none" stroke="#a8a090"><path d="M.5.5h15v15H.5z" strokeDasharray="3 2" /></Svg>
        </PillButton>
        <PillButton $on aria-label="锁定">
          <Svg w={12} h={14}>
            <path d="M0 6h12v8H0z" fill="#fff" />
            <path d="M3 7V4a3 3 0 0 1 6 0v3" fill="none" stroke="#fff" strokeWidth="1.800" />
            <path d="M5.300 8.500h1.400v3H5.300z" fill="#0c61bd" />
          </Svg>
        </PillButton>
      </Pill>
      <Pill $w={48} $gap={7}>
        <PillButton $on aria-label="布局">
          <Svg w={14} h={12} fill="#e8e8e8"><path d="M0 0h3v12H0zM5 0h9v3H5zM5 4h9v8H5z" /></Svg>
        </PillButton>
        <PillButton><b>R</b></PillButton>
      </Pill>
      <Pill $w={38} $gap={7}>
        <PillButton $on aria-label="网格对齐">
          <Svg w={13} h={15} fill="none" stroke="#fff"><path d="M.5.5h12v14H.5zM4.500 0v15M8.500 0v15M0 4h13M0 7.500h13M0 11h13" /></Svg>
        </PillButton>
        <PillButton>4</PillButton>
      </Pill>
      <Pill>
        <PillButton aria-label="选择">
          <Svg w={14} h={14}>
            <path d="M.5 4V1H4M10 1h3.500v3M13.500 10v3H10M4 13H.5v-3" fill="none" stroke="#909090" />
            <path d="M4 2l6 5.500H7.500l1.500 3-1.500 1-1.500-3-2 1.500z" fill="#d8d8d8" />
          </Svg>
        </PillButton>
      </Pill>
      <Pill $dim>
        <PillButton aria-label="背景">
          <Svg w={16} h={12}>
            <path d="M.5 3V.5H3M13 .5h2.500V3" fill="none" stroke="#666" />
            <path d="M0 12V9l4-4 4 3 4-4 4 4v4z" fill="#707070" />
          </Svg>
        </PillButton>
      </Pill>
      <Pill $dim>
        <PillButton aria-label="翻转">
          <Svg w={16} h={12}>
            <path d="M6.500 1v10.500H.5z" fill="none" stroke="#707070" />
            <path d="M9 0v12h7z" fill="#707070" />
          </Svg>
        </PillButton>
      </Pill>
      <Pill $w={78} $gap={3}><PillButton>屏幕尺寸<Chevron /></PillButton></Pill>
      <Pill $w={78} $gap={3}><PillButton>填充屏幕<Chevron /></PillButton></Pill>
    </CanvasTools>
  </CanvasPanel>
);

/* ---------- hand-drawn notes over the editor ---------- */

const Annotations = styled.svg`
  position: fixed;
  inset: 0;
  width: 100%;
  height: 100%;
  pointer-events: none;
`;

const Watermark = styled.div`
  position: fixed;
  right: 16px;
  bottom: 5px;
  font-size: 20px;
  line-height: 30px;
  color: #d0d0d0;
  pointer-events: none;
`;

const RedMarks = () => (
  <Annotations aria-hidden="true">
    <g fill="none" stroke="#fb3838" strokeWidth="3">
      <rect x="37.500" y="493.500" width="84" height="37" />
      <rect x="1323.500" y="397.500" width="217" height="30" />
      <rect x="1322.500" y="472.500" width="290" height="33" />
      <rect x="1338.500" y="639.500" width="207" height="29" />
    </g>
    <g fill="#fb3838">
      <path d="M209.500 386.500L150.500 460 146.300 458 142 476 158 467.500 155 464.500z" />
      <path d="M161 513L275 536.500 388.500 564 391 560.500 406 571.500 387 576 388 572.300 275 541z" />
      <path d="M1270 380L1287 389.500 1291.500 388 1298 400 1284 398 1285.500 394.500z" />
      <path d="M1289.500 472.500L1301 473 1301 470 1309 476.700 1298 480 1299 477z" />
      <path d="M1313.500 636L1325 642.500 1328 640 1332 649 1320.500 648 1322 645.500z" />
    </g>
  </Annotations>
);

const menu = ["文件", "编辑", "资产", "查看", "调试", "窗口", "工具", "帮助"];

const App = () => {
  return (
    <Window>
      <GlobalStyle />
      <TitleBar>
        <LogoCell>
          <UnrealLogo />
        </LogoCell>
        <TitleMain>
          <Menu>
            {menu.map((item) => (
              <button key={item}>{item}</button>
            ))}
          </Menu>
          <AssetTab>
            <WidgetIcon />
            <span>TestUI</span>
            <button aria-label="关闭"><Cross /></button>
          </AssetTab>
        </TitleMain>
        <TitleSide>
          <WindowButtons>
            <button aria-label="最小化"><Svg w={10} h={10} stroke="#d0d0d0"><path d="M0 5.500h10" /></Svg></button>
            <button aria-label="最大化"><Svg w={10} h={10} fill="none" stroke="#d0d0d0"><path d="M.5.5h9v9h-9z" /></Svg></button>
            <button aria-label="关闭窗口"><Svg w={12} h={12} stroke="#d0d0d0" strokeWidth="1.400"><path d="M1 1l10 10M11 1L1 11" /></Svg></button>
          </WindowButtons>
          <ParentClass>
            <span>父类<Mark>：</Mark></span>
            <DottedLink href="#">用户控件</DottedLink>
          </ParentClass>
        </TitleSide>
      </TitleBar>

      <Toolbar>
        <ToolGroup $left={17} $right={16} $gap={25}>
          <ToolButton aria-label="保存"><SaveIcon /></ToolButton>
          <ToolButton aria-label="浏览"><BrowseIcon /></ToolButton>
        </ToolGroup>
        <ToolGroup $left={16} $right={12} $gap={14}>
          <ToolButton><CompileIcon />编译</ToolButton>
          <ToolButton aria-label="编译选项"><Dots /></ToolButton>
        </ToolGroup>
        <ToolGroup $short $left={12} $right={11}>
          <ToolButton><DiffIcon />对比<Chevron /></ToolButton>
        </ToolGroup>
        <ToolGroup $left={17} $right={13}>
          <PlayGroup>
            <ToolButton aria-label="播放"><PlayIcon /></ToolButton>
            <ToolButton aria-label="步进"><StepIcon /></ToolButton>
            <ToolButton aria-label="停止"><StopIcon /></ToolButton>
            <ToolButton aria-label="弹出"><EjectIcon /></ToolButton>
            <i />
            <ToolButton aria-label="播放选项"><Dots /></ToolButton>
          </PlayGroup>
        </ToolGroup>
        <ToolGroup $left={15} $right={11} $gap={7}>
          <Combo label="调试对象" value="未选中调试对象" $w={126} $h={30} $size={13} />
          <ToolButton aria-label="浏览调试对象"><BrowseIcon size={17} color="#777" /></ToolButton>
        </ToolGroup>
        <ToolGroup $last $left={16}>
          <ToolButton><ReflectorIcon />控件反射器</ToolButton>
        </ToolGroup>
        <ModeSwitch>
          <ModeButton $active><DesignerIcon />设计器</ModeButton>
          <ModeButton><GraphIcon />图表</ModeButton>
        </ModeSwitch>
      </Toolbar>

      <Workspace>
        <LeftColumn>
          <Palette />
          <Hierarchy />
        </LeftColumn>
        <Designer />
        <Details />
      </Workspace>

      <StatusBar>
        <StatusItem $right={9}>
          <ToolButton><BrowseIcon size={17} />内容侧滑菜单</ToolButton>
        </StatusItem>
        <StatusItem>
          <ToolButton>
            <Svg w={16} h={15}>
              <path d="M0 6h15v9H0z" fill="#b8b8b8" />
              <path d="M1 4l13-3.500" stroke="#c0c0c0" strokeWidth="2" strokeDasharray="2.500 1.500" />
              <path d="M2 10h11M7.500 8v7" stroke="#777" />
            </Svg>
            动画
          </ToolButton>
        </StatusItem>
        <StatusItem>
          <ToolButton>
            <Svg w={14} h={16}>
              <path d="M1 2h12v14H1z" fill="#c8c8c8" />
              <path d="M3 0v3M6 0v3M9 0v3M12 0v3" stroke="#c8c8c8" />
              <path d="M4 7l3 2.500L4 12M8 13h3" fill="none" stroke="#222" strokeWidth="1.400" />
            </Svg>
            输出日志
          </ToolButton>
        </StatusItem>
        <StatusItem $left={13} $right={8} $gap={13}>
          <ToolButton>
            <Svg w={16} h={14} fill="none" stroke="#c8c8c8">
              <path d="M.5.5h15v13H.5z" />
              <path d="M3.500 4l3.500 3-3.500 3M8 10.500h5" strokeWidth="1.500" />
            </Svg>
            Cmd
            <Chevron />
          </ToolButton>
          <Field type="text" aria-label="控制台命令" placeholder="输入控制台命令" $w={300} $size={12} />
        </StatusItem>
        <StatusItem $push $left={0} $right={1} />
        <StatusItem $left={14} $right={22}>
          <ToolButton><SaveIcon size={14} />所有已保存</ToolButton>
        </StatusItem>
        <StatusItem $left={14} $right={15}>
          <ToolButton>
            <Svg w={16} h={16} fill="none" stroke="#c8c8c8" strokeWidth="2">
              <path d="M3 4v8M12 4c0 5-9 3-9 7" />
              <circle cx="3" cy="3" r="1.500" />
              <circle cx="3" cy="13" r="1.500" />
              <circle cx="12" cy="3" r="1.500" />
            </Svg>
            版本控制
            <Chevron />
          </ToolButton>
        </StatusItem>
      </StatusBar>

      <RedMarks />
      <Watermark>CSDN @暂时先用这个名字</Watermark>
    </Window>
  );
};

export default App;
